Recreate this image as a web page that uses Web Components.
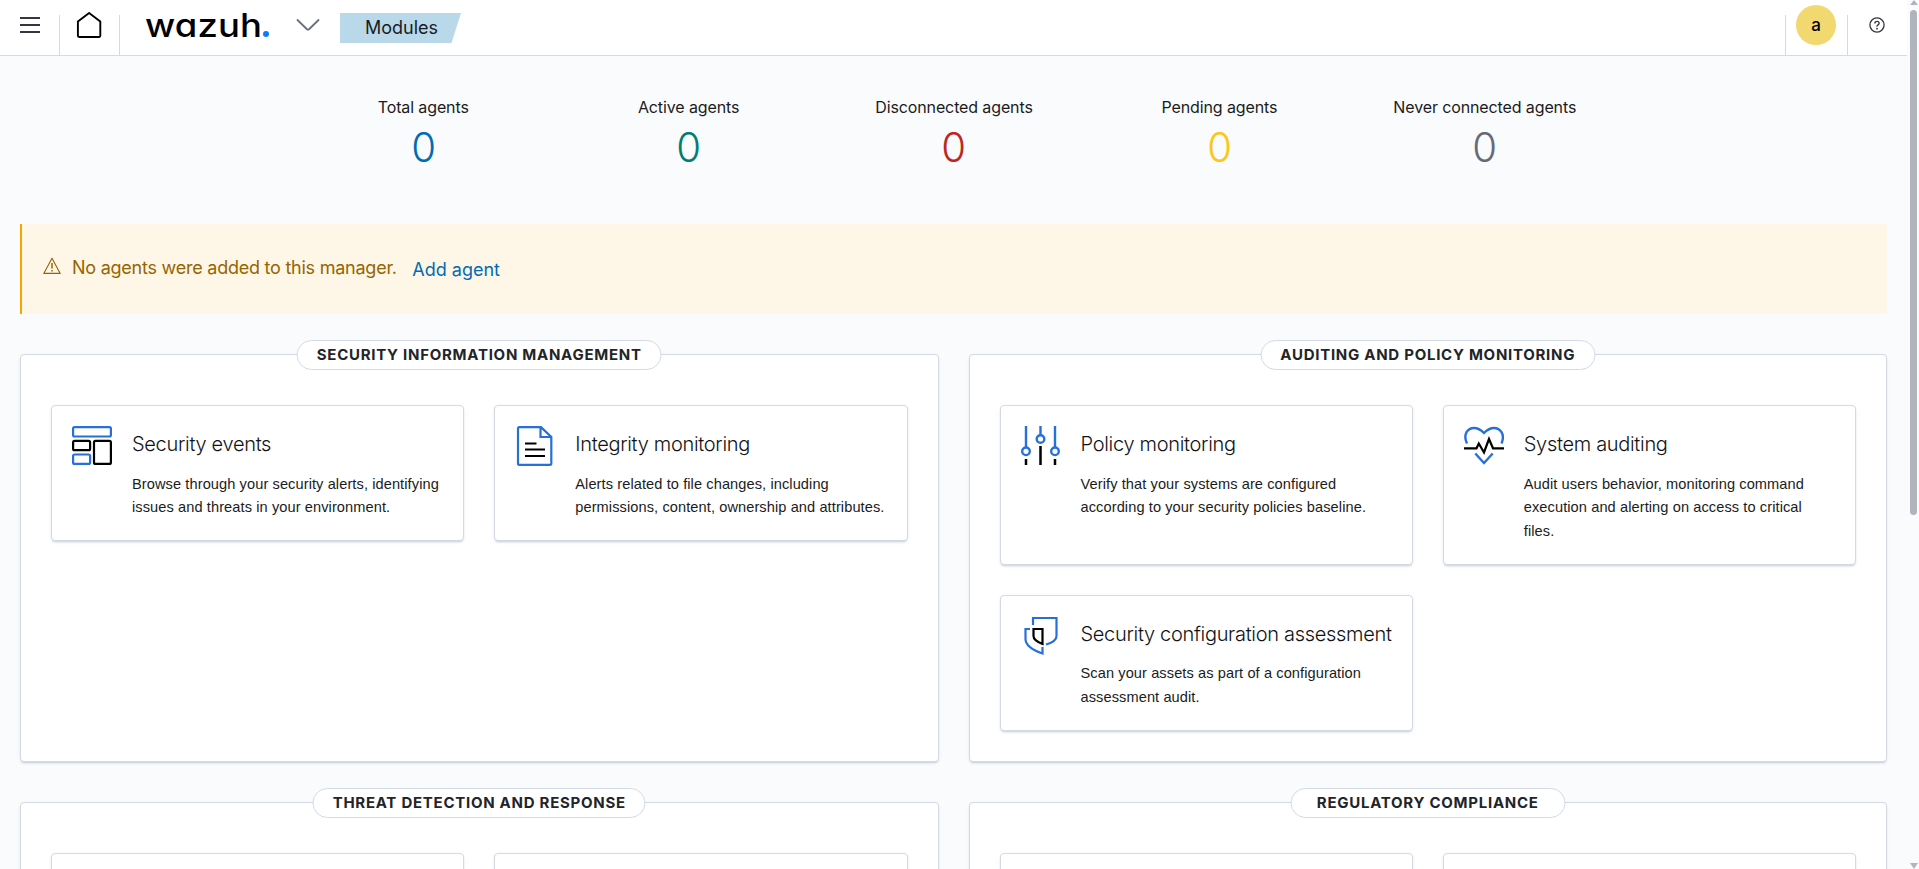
<!DOCTYPE html>
<html lang="en">
<head>
<meta charset="utf-8">
<title>Wazuh</title>
<style>
html,body{margin:0;height:100%;overflow:hidden;background:#fafbfd}
body{font-family:Inter,"Liberation Sans",sans-serif;color:#1a1c21}
</style>
</head>
<body>
<wz-app></wz-app>
<script>
const define = (name, html) => {
  const t = document.createElement('template');
  t.innerHTML = html;
  customElements.define(name, class extends HTMLElement {
    constructor() {
      super();
      this.attachShadow({ mode: 'open' }).append(t.content.cloneNode(true));
    }
  });
};

define('wz-logo', `<style>
:host{display:flex;width:126px;height:55px;box-sizing:border-box;align-items:flex-start;color:#000}
b{display:block;width:117px;flex:none;font:500 33px/40px Inter,sans-serif;font-feature-settings:"cv11";padding-top:5px;transform:scaleX(1.105);transform-origin:0 0;margin-left:-1px;letter-spacing:.1px}
i{width:6.4px;height:6.4px;flex:none;border-radius:50%;background:#0a7dff;margin:31px 0 0 1px}
</style><b>wazuh</b><i></i>`);

define('wz-crumb', `<style>
:host{display:block;width:121px;height:30px;background:#b9d8ea;clip-path:polygon(0 0,100% 0,111.5px 100%,0 100%);font:400 18px/30px Inter,sans-serif;color:#1a1c21;padding-left:25px;box-sizing:border-box}
</style><slot></slot>`);

define('wz-header', `<style>
:host{display:flex;height:56px;box-sizing:border-box;border-bottom:1px solid #d3dae6;background:#fff}
.cell{display:flex;align-items:flex-start;box-sizing:border-box}
.bar{width:1px;height:40px;margin-top:15px;background:#d3dae6}
.menu{width:59px;padding:17px 0 0 20px}
.home{width:59px;padding:11px 0 0 16px}
wz-logo{margin-left:26px}
.chev{margin:18px 0 0 24px}
wz-crumb{margin:13px 0 0 20px}
.sp{flex:1}
.av{width:40px;height:40px;border-radius:50%;background:#f1d86f;margin:5px 11px 0 10px;font:500 17px/40px Inter,sans-serif;text-align:center;color:#000}
.help{width:59px;padding:17px 0 0 21px}
svg{display:block}
</style>
<div class="cell menu"><svg width="20" height="16" fill="#343741"><path d="M0 0h20v2H0zM0 7h20v2H0zM0 14h20v2H0z"/></svg></div>
<div class="bar"></div>
<div class="cell home"><svg width="28" height="28" fill="none" stroke="#000" stroke-width="1.9" stroke-linejoin="round"><path d="M13.1 2 24.3 10.6V24.8Q24.3 26 23.1 26H3.1Q1.9 26 1.9 24.8V10.6Z"/></svg></div>
<div class="bar"></div>
<wz-logo></wz-logo>
<svg class="chev" width="24" height="14" fill="none" stroke="#69707d" stroke-width="1.8" stroke-linecap="round" stroke-linejoin="round"><path d="M1.5 2 10.7 11Q12 12.2 13.3 11L22.5 2"/></svg>
<wz-crumb>Modules</wz-crumb>
<div class="sp"></div>
<div class="bar"></div><div class="av">a</div><div class="bar"></div>
<div class="cell help"><svg width="16" height="16" fill="none" stroke="#343741"><circle cx="8" cy="8" r="7.1" stroke-width="1.3"/><path d="M5.9 6.4Q5.9 4.4 8 4.4T10.1 6.2Q10.1 7.2 9 7.8T8 9.6" stroke-width="1.4"/><circle cx="8" cy="11.7" r=".9" fill="#343741" stroke="none"/></svg></div>`);

define('wz-stat', `<style>
:host{display:block;text-align:center;width:265.4px}
.t{font:400 16px/24px Inter,sans-serif;letter-spacing:-.12px}
.n{font:300 41px/40px Inter,sans-serif;margin-top:8px;color:var(--c);transform:scaleX(.98)}
</style><div class="t"><slot></slot></div><div class="n"><slot name="n"></slot></div>`);

define('wz-callout', `<style>
:host{display:flex;height:90px;box-sizing:border-box;border-left:2px solid #f5a700;background:#fef6e6;margin:0 20px;padding:32px 0 0 21px;font:400 18px/24px Inter,sans-serif;color:#966500}
svg{margin-top:1px}
.m{margin-left:11px;letter-spacing:-.24px}
a{color:#006bb4;margin:2px 0 0 15.5px}
</style><svg width="18" height="18" fill="none" stroke="#966500"><path d="M9 1.2 17.2 16.4H.8Z" stroke-width="1.1" stroke-linejoin="round"/><path d="M9 6v5.4M9 13v1.6" stroke-width="1.5"/></svg>
<span class="m"><slot></slot></span><a><slot name="link"></slot></a>`);

define('wz-card', `<style>
:host{display:flex;box-sizing:border-box;border:1px solid #d3dae6;border-radius:4px;background:#fff;box-shadow:0 2px 2px -1px rgba(152,162,179,.45),0 1px 5px -2px rgba(152,162,179,.4);padding:20px 12px 20px 20px;min-height:136px}
.i{width:40px;height:40px;flex:none;margin-right:20px}
.t{font:350 20px/36px Inter,sans-serif;letter-spacing:-.31px;color:#111318;white-space:nowrap}
.d{font:400 14.6px/23.7px "Liberation Sans",Arial,sans-serif;letter-spacing:.09px;color:#1a1c21;margin-top:10.6px;white-space:nowrap}
</style><div class="i"><slot name="icon"></slot></div><div><div class="t"><slot name="title"></slot></div><div class="d"><slot></slot></div></div>`);

define('wz-panel', `<style>
:host{display:block;position:relative;box-sizing:border-box;border:1px solid #d3dae6;border-radius:4px;background:#fff;box-shadow:0 2px 2px -1px rgba(152,162,179,.45),0 1px 5px -2px rgba(152,162,179,.4);padding:50px 30px 30px}
.p{position:absolute;top:-15px;left:50%;transform:translateX(-50%);box-sizing:border-box;height:30px;min-width:30%;padding:0 19px;border:1px solid #d3dae6;border-radius:15px;background:#fff;font:700 15px/28px Inter,sans-serif;letter-spacing:.73px;text-align:center;white-space:nowrap;color:#222427}
.g{display:grid;grid-template-columns:minmax(0,1fr) minmax(0,1fr);gap:30px}
</style><div class="p"><slot name="title"></slot></div><div class="g"><slot></slot></div>`);

define('wz-scroll', `<style>
:host{display:flex;flex-direction:column;align-items:center;justify-content:space-between;width:12px;height:869px;background:#fafbfd}
i{width:7px;height:505px;border-radius:3.5px;background:#b0b4bd;margin:5px 0 auto 1px}
svg{display:block;margin-left:1px}
</style><svg width="8" height="5" fill="#b0b4bd"><path d="M4 0 8 5H0Z"/></svg><i></i><svg width="8" height="6" fill="#b0b4bd"><path d="M0 0H8L4 6Z"/></svg>`);

define('wz-app', `<style>
:host{display:flex;height:869px;overflow:hidden}
main{width:1907px;height:869px;overflow:hidden}
.s{display:flex;justify-content:center;padding:39px 0 0 1px;height:168px;box-sizing:border-box}
.g{display:grid;grid-template-columns:minmax(0,1fr) minmax(0,1fr);gap:40px 30px;margin:40px 20px 0}
svg{display:block}
</style>
<main>
<wz-header></wz-header>
<div class="s">
<wz-stat style="--c:#006bb4">Total agents<span slot="n">0</span></wz-stat>
<wz-stat style="--c:#017d73">Active agents<span slot="n">0</span></wz-stat>
<wz-stat style="--c:#bd271e">Disconnected agents<span slot="n">0</span></wz-stat>
<wz-stat style="--c:#fec514">Pending agents<span slot="n">0</span></wz-stat>
<wz-stat style="--c:#646a77">Never connected agents<span slot="n">0</span></wz-stat>
</div>
<wz-callout>No agents were added to this manager.<span slot="link">Add agent</span></wz-callout>
<div class="g">
<wz-panel><span slot="title">SECURITY INFORMATION MANAGEMENT</span>
<wz-card><svg slot="icon" width="40" height="40" fill="none" stroke-width="2.2"><g stroke="#276fd9"><rect x="1.1" y="1.1" width="37.8" height="9.4" rx="1.5"/><rect x="1.1" y="28.5" width="17" height="9.4" rx="1.5"/></g><g stroke="#000"><rect x="1.1" y="14.8" width="17" height="9.4" rx="1.5"/><rect x="22" y="14.8" width="16.9" height="23.1" rx="1.5"/></g></svg><span slot="title">Security events</span>Browse through your security alerts, identifying<br>issues and threats in your environment.</wz-card>
<wz-card><svg slot="icon" width="40" height="40" fill="none" stroke-width="2.2"><path stroke="#276fd9" d="M26 1.1H4.5Q3 1.1 3 2.5V37.5Q3 38.9 4.5 38.9H34.8Q36.3 38.9 36.3 37.5V11ZM25.5 1.1V11H36"/><path stroke="#000" d="M10 17.5H21.5M10 23.5H30M10 30H30"/></svg><span slot="title">Integrity monitoring</span>Alerts related to file changes, including<br>permissions, content, ownership and attributes.</wz-card>
</wz-panel>
<wz-panel><span slot="title">AUDITING AND POLICY MONITORING</span>
<wz-card><svg slot="icon" width="40" height="40" fill="none"><g stroke="#276fd9" stroke-width="2.4"><path d="M5 0V21M19.5 0V9M34 0V21"/><circle cx="5" cy="25.3" r="3.8"/><circle cx="19.5" cy="13" r="3.8"/><circle cx="34" cy="25.3" r="3.8"/></g><path stroke="#000" stroke-width="2.5" d="M5 33V39M19.5 20V39M34 33V39"/></svg><span slot="title">Policy monitoring</span>Verify that your systems are configured<br>according to your security policies baseline.</wz-card>
<wz-card><svg slot="icon" width="40" height="40" fill="none" stroke-width="2.4"><path stroke="#276fd9" d="M3 17.5C-1.5 8 4 2 10 2Q15 2 20 7Q25 2 30 2C36 2 41.500 8 37.5 17.5M11.3 27.5 20 37 28.7 27.5"/><path stroke="#000" stroke-width="2.2" d="M0 22.3H12.5L14.8 17.5 20 26.500 25 13 29 22.300H40"/></svg><span slot="title">System auditing</span>Audit users behavior, monitoring command<br>execution and alerting on access to critical<br>files.</wz-card>
<wz-card><svg slot="icon" width="40" height="40" fill="none" stroke-width="2.2"><path stroke="#276fd9" d="M12 9V2H35.5V20Q35.5 25.5 25 28.5M9 13H4.5V23Q4.5 31.5 21.5 37.5V31"/><path stroke="#000" d="M12.5 13H21.5V28Q12.5 24.5 12.5 20Z"/></svg><span slot="title">Security configuration assessment</span>Scan your assets as part of a configuration<br>assessment audit.</wz-card>
</wz-panel>
<wz-panel><span slot="title">THREAT DETECTION AND RESPONSE</span><wz-card></wz-card><wz-card></wz-card></wz-panel>
<wz-panel><span slot="title">REGULATORY COMPLIANCE</span><wz-card></wz-card><wz-card></wz-card></wz-panel>
</div>
</main>
<wz-scroll></wz-scroll>`);
</script>
</body>
</html>
